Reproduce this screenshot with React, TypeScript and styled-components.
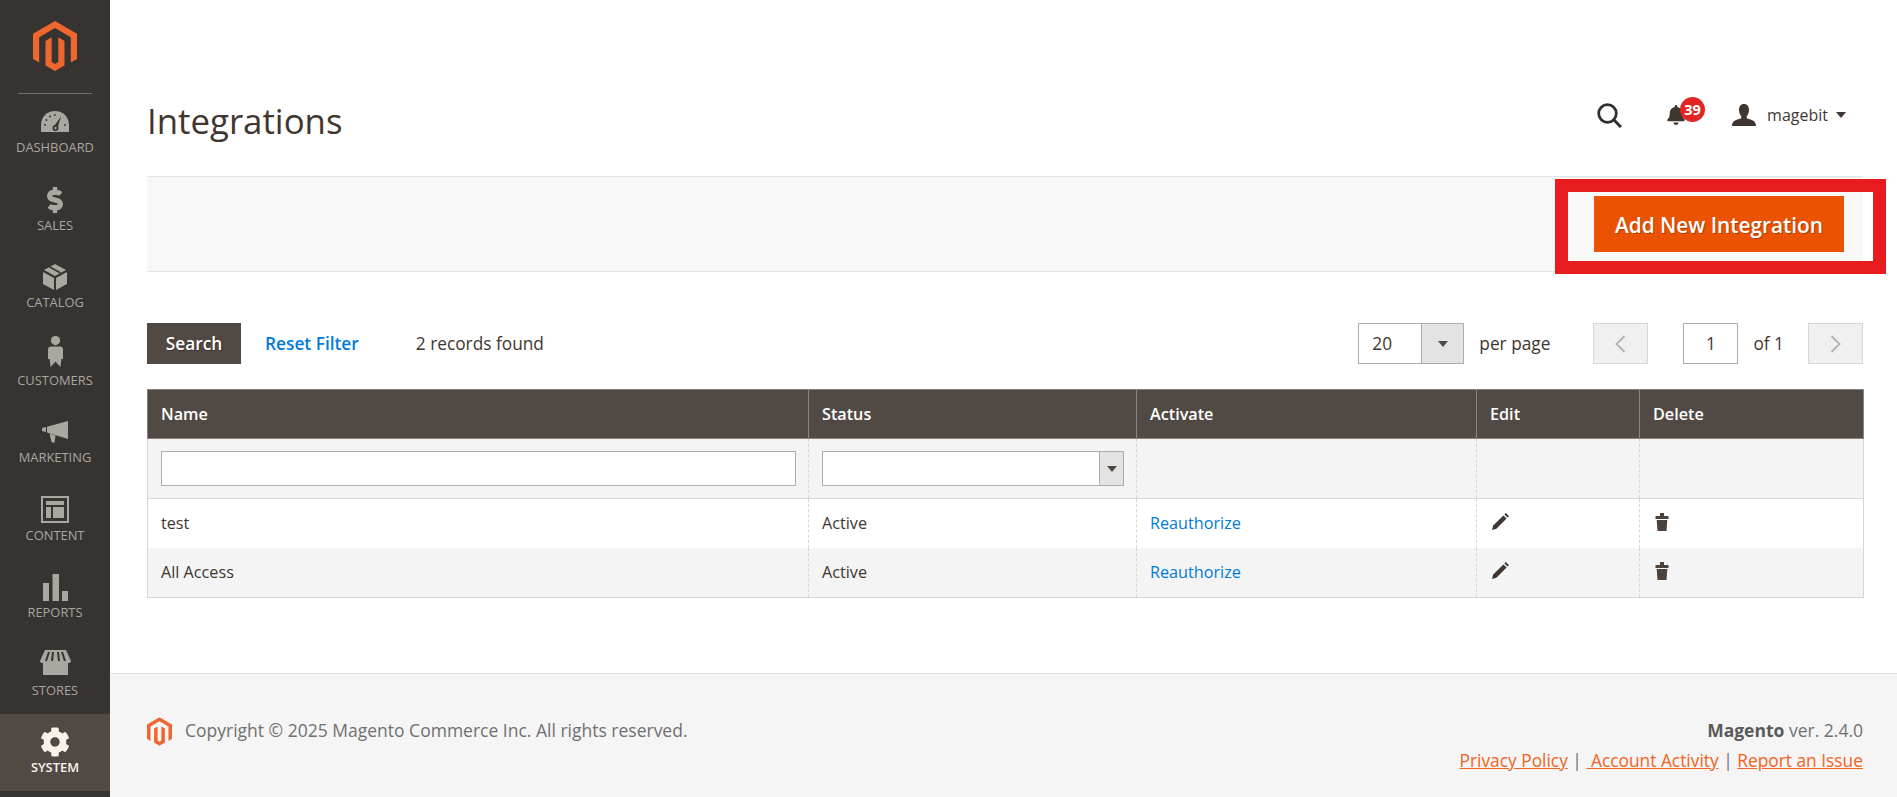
import React from "react";
import styled, { createGlobalStyle } from "styled-components";
import { FaBell, FaCog, FaDollarSign } from "react-icons/fa";

const GlobalStyle = createGlobalStyle`
  html, body {
    margin: 0;
    padding: 0;
    background: #ffffff;
    color: #41362f;
    font-family: "Open Sans", "Liberation Sans", sans-serif;
    font-size: 17.3px;
  }
  * { box-sizing: border-box; }
`;

const Page = styled.div`
  display: flex;
  width: 100%;
  height: 797px;
  overflow: hidden;
`;

const Sidebar = styled.nav`
  flex: 0 0 110px;
  display: flex;
  flex-direction: column;
  background: #373330;
`;

const LogoArea = styled.div`
  display: flex;
  height: 94px;
  margin: 0 18px;
  padding-top: 21px;
  justify-content: center;
  align-items: flex-start;
  border-bottom: 1px solid #736e69;
`;

const MenuItem = styled.a<{ $active?: boolean }>`
  display: flex;
  flex-direction: column;
  align-items: center;
  height: 77.5px;
  margin-top: ${(p) => (p.$active ? "-0.5px" : "0")};
  padding-top: 8px;
  background: ${(p) => (p.$active ? "#514943" : "transparent")};
  color: ${(p) => (p.$active ? "#f7f3eb" : "#aaa6a0")};
  font-size: 12.9px;
  font-weight: ${(p) => (p.$active ? 600 : 400)};
  text-transform: uppercase;
`;

const MenuIcon = styled.span`
  display: flex;
  height: 40px;
  align-items: center;
  justify-content: center;
`;

const MenuLabel = styled.span`
  line-height: 16px;
  margin-top: -3px;
`;

const Main = styled.main`
  flex: 1;
  min-width: 0;
  display: flex;
  flex-direction: column;
`;

const Content = styled.div`
  flex: 1;
  padding: 0 34px 0 37px;
`;

const PageHeader = styled.header`
  display: flex;
  height: 176px;
  justify-content: space-between;
  align-items: flex-start;
`;

const PageTitle = styled.h1`
  margin: 97px 0 0;
  color: #41362f;
  font-size: 34.8px;
  font-weight: 400;
  line-height: 48px;
`;

const Tools = styled.div`
  display: flex;
  height: 30px;
  margin: 100px 17px 0 0;
  align-items: center;
`;

const BellWrap = styled.span`
  position: relative;
  display: flex;
  width: 66px;
  margin-left: 44px;
  color: #41362f;
`;

const Badge = styled.span`
  position: absolute;
  left: 14px;
  top: -8px;
  width: 25px;
  height: 25px;
  border-radius: 50%;
  background: #e22626;
  color: #ffffff;
  font-size: 14.5px;
  font-weight: 700;
  line-height: 25px;
  text-align: center;
`;

const UserName = styled.span`
  margin: 0 8px 0 11px;
  color: #41362f;
  font-size: 16px;
`;

const Caret = styled.span<{ $color?: string }>`
  width: 0;
  height: 0;
  border-left: 5.5px solid transparent;
  border-right: 5.5px solid transparent;
  border-top: 6.5px solid ${(p) => p.$color || "#41362f"};
`;

const ActionBar = styled.div`
  position: relative;
  display: flex;
  height: 96px;
  padding: 19px 19px 0 0;
  justify-content: flex-end;
  background: #f8f8f8;
  border-top: 1px solid #e3e3e3;
  border-bottom: 1px solid #e3e3e3;
`;

const AddButton = styled.button`
  width: 250px;
  height: 56px;
  padding: 2px 0 0;
  border: 1px solid #eb5202;
  background: #eb5202;
  color: #ffffff;
  font-family: inherit;
  font-size: 20.8px;
  font-weight: 600;
  text-shadow: 1px 1px 0 rgba(0, 0, 0, 0.25);
`;

const HighlightBox = styled.div`
  position: absolute;
  left: 1408px;
  top: 2px;
  width: 331px;
  height: 95px;
  border: 13px solid #e81c1f;
  pointer-events: none;
`;

const ListToolbar = styled.div`
  display: flex;
  height: 41px;
  margin: 51px 0 25px;
  align-items: center;
`;

const SearchButton = styled.button`
  width: 94px;
  height: 41px;
  padding: 0;
  border: 0;
  background: #514943;
  color: #ffffff;
  font-family: inherit;
  font-size: 17.3px;
  font-weight: 600;
  text-shadow: 1px 1px 1px rgba(0, 0, 0, 0.3);
`;

const ResetLink = styled.a`
  margin-left: 24px;
  color: #007bdb;
  font-weight: 600;
`;

const Records = styled.span`
  margin-left: 57px;
`;

const Pager = styled.div`
  display: flex;
  margin-left: auto;
  align-items: center;
`;

const SelectBox = styled.div<{ $width: number; $height: number; $arrow: number }>`
  display: flex;
  width: ${(p) => p.$width}px;
  height: ${(p) => p.$height}px;
  padding-left: 13px;
  align-items: center;
  justify-content: space-between;
  background: #ffffff;
  border: 1px solid #adadad;

  & > span:last-child {
    display: flex;
    width: ${(p) => p.$arrow}px;
    height: 100%;
    align-items: center;
    justify-content: center;
    background: #e3e3e3;
    border-left: 1px solid #adadad;
  }
`;

const PagerText = styled.span<{ $left: number; $right: number }>`
  margin: 0 ${(p) => p.$right}px 0 ${(p) => p.$left}px;
`;

const PageButton = styled.span`
  display: flex;
  width: 55px;
  height: 41px;
  align-items: center;
  justify-content: center;
  background: #f0f0f0;
  border: 1px solid #d6d6d6;
`;

const PageInput = styled.input`
  width: 55px;
  height: 41px;
  margin-left: 35px;
  padding: 0;
  border: 1px solid #adadad;
  background: #ffffff;
  color: #41362f;
  font-family: inherit;
  font-size: 17.3px;
  text-align: center;
`;

const Grid = styled.table`
  width: calc(100% - 1px);
  table-layout: fixed;
  border-collapse: collapse;
  border: 1px solid #d6d6d6;
  font-size: 16.2px;
`;

const Col = styled.col<{ $w: number }>`
  width: ${(p) => p.$w}px;
`;

const HeadCell = styled.th`
  height: 49px;
  padding: 0 13px;
  background: #514943;
  border: 1px solid #8a837f;
  color: #ffffff;
  font-size: 16.2px;
  font-weight: 600;
  text-align: left;
`;

const FilterCell = styled.td`
  height: 60px;
  padding: 0 12px 0 13px;
  background: #f4f4f4;
  border-left: 1px dashed #d6d6d6;
  border-bottom: 1px solid #d6d6d6;

  &:first-child { border-left: 0; }
`;

const FilterInput = styled.input`
  display: block;
  width: 100%;
  height: 35px;
  border: 1px solid #adadad;
  background: #ffffff;
`;

const Cell = styled.td<{ $alt?: boolean }>`
  height: 49.5px;
  padding: 0 13px 2px;
  background: ${(p) => (p.$alt ? "#f4f4f4" : "#ffffff")};
  border-left: 1px dashed #d6d6d6;
  color: #41362f;

  &:first-child { border-left: 0; }
`;

const RowLink = styled.a`
  color: #007bdb;
`;

const CellIcon = styled.span`
  display: flex;
  margin: -2px 0 0 2px;
  color: #41362f;
`;

const Footer = styled.footer`
  display: flex;
  height: 124px;
  padding: 41px 34px 0 37px;
  justify-content: space-between;
  background: #f5f5f5;
  border-top: 1px solid #e3e3e3;
  color: #707070;
  font-size: 17.5px;
`;

const Copyright = styled.div`
  display: flex;
  height: 32px;
  align-items: center;
  gap: 13px;
`;

const CopyText = styled.span`
  margin-bottom: 2px;
`;

const Legal = styled.div`
  line-height: 30px;
  text-align: right;

  strong { color: #5a5a5a; font-weight: 700; }
`;

const LegalLinks = styled.div`
  font-size: 17.35px;
`;

const LegalLink = styled.a`
  color: #f26322;
  text-decoration: underline;
  white-space: pre;
`;

function MagentoLogo({ width, height }: { width: number; height: number }) {
  return (
    <svg width={width} height={height} viewBox="0 0 44 50" fill="#ee672f">
      <path d="M22 0 44 12.7V37.9L37.8 41.5V16.3L22 7.1 6.2 16.3V41.5L0 37.9V12.7Z" />
      <path d="M22 50 12.5 44.5V19.9L18.7 16.3V41L22 42.9 25.3 41V16.3L31.5 19.9V44.5Z" />
    </svg>
  );
}

const DashboardIcon = () => (
  <svg width="28" height="24" viewBox="0 0 28 24" fill="currentColor">
    <path d="M0 22V15.5C0 6.5 6 1 14 1S28 6.5 28 15.5V22Z" />
    <path d="M12.8 16.5 20 6.5 16.4 18.5Z" fill="#373330" />
    <circle cx="14.5" cy="18" r="3" fill="#373330" />
    <circle cx="14.5" cy="18" r="1.2" fill="currentColor" />
    <g fill="#373330">
      <circle cx="4" cy="15" r="0.9" />
      <circle cx="5.5" cy="10" r="0.9" />
      <circle cx="9" cy="6.5" r="0.9" />
      <circle cx="14" cy="5" r="0.9" />
      <circle cx="24" cy="15" r="0.9" />
    </g>
  </svg>
);

const CatalogIcon = () => (
  <svg width="24" height="26" viewBox="0 0 24 26" fill="currentColor">
    <path d="M0 8 11 14V26L0 20Z" />
    <path d="M24 8 13 14V26L24 20Z" />
    <path d="M12 0 23 6 12 12 1 6Z" />
    <path d="M6 2.5 17.5 9" stroke="#373330" strokeWidth="1.6" fill="none" />
  </svg>
);

const CustomersIcon = () => (
  <svg width="15" height="38" viewBox="0 0 15 38" fill="currentColor">
    <circle cx="7.5" cy="4.6" r="4.6" />
    <path d="M3 10.5H12Q15 10.5 15 13.5V23H13.4L12.4 31 7.5 25.5 2.6 31 1.6 23H0V13.5Q0 10.5 3 10.5Z" />
  </svg>
);

const MarketingIcon = () => (
  <svg width="26" height="22" viewBox="0 0 26 22" fill="currentColor">
    <path d="M0 7 4 6V11L0 10Z" />
    <path d="M5 5.7 26 0V18L5 11.5Z" />
    <path d="M7.5 12.5 13.5 14.4 12.5 22 9.5 21Z" />
  </svg>
);

const ContentIcon = () => (
  <svg width="28" height="27" viewBox="0 0 28 27" fill="currentColor">
    <path fillRule="evenodd" d="M0 0H28V27H0ZM2 2V25H26V2Z" />
    <rect x="5" y="5" width="18" height="4" />
    <rect x="5" y="11" width="5" height="11" />
    <rect x="12" y="11" width="11" height="11" />
  </svg>
);

const ReportsIcon = () => (
  <svg width="25" height="27" viewBox="0 0 25 27" fill="currentColor">
    <rect x="0" y="9" width="6" height="18" />
    <rect x="9.5" y="0" width="6.5" height="27" />
    <rect x="19" y="17" width="6" height="10" />
  </svg>
);

const StoresIcon = () => (
  <svg width="31" height="29" viewBox="0 0 31 29" fill="currentColor">
    <path d="M5 0H26L31 11Q31 13 29 13H2Q0 13 0 11Z" />
    <path d="M3 12H28V25H3Z" />
    <path d="M9 2 6 11M13 2 12 11M18 2 19 11M22 2 25 11" stroke="#373330" strokeWidth="2" fill="none" />
  </svg>
);

const SearchIcon = () => (
  <svg width="25" height="25" viewBox="0 0 25 25" fill="none" stroke="#303030">
    <circle cx="10.5" cy="10.5" r="8.8" strokeWidth="2.8" />
    <path d="M16.5 16.5 24 24" strokeWidth="3" />
  </svg>
);

const UserIcon = () => (
  <svg width="24" height="22" viewBox="0 0 24 22" fill="#41362f">
    <path d="M12 0C15.5 0 17 2.6 17 6 17 9 15.8 11 14.7 12.2V14.2C18.5 15.6 24 16 24 22H0C0 16 5.5 15.6 9.3 14.2V12.2C8.2 11 7 9 7 6 7 2.6 8.5 0 12 0Z" />
  </svg>
);

const PencilIcon = () => (
  <svg width="17" height="17" viewBox="0 0 17 17" fill="#41362f">
    <path d="M0 17 1.2 12.6 11.4 2.4 14.6 5.6 4.4 15.8Z" />
    <path d="M12.4 1.4 13.8 0 17 3.2 15.6 4.6Z" />
  </svg>
);

const TrashIcon = () => (
  <svg width="14" height="18" viewBox="0 0 14 18" fill="#4c423b">
    <path d="M5 0H9V3H5Z" />
    <path d="M0.5 3H13.5V6H0.5Z" />
    <path d="M1.7 7H12.3L11.5 18H2.5Z" />
  </svg>
);

const Chevron = ({ flip }: { flip?: boolean }) => (
  <svg width="11" height="18" viewBox="0 0 11 18" fill="none" stroke="#b5b5b5" strokeWidth="2">
    <path d={flip ? "M1.5 1 9.5 9 1.5 17" : "M9.5 1 1.5 9 9.5 17"} />
  </svg>
);

const menu = [
  { label: "Dashboard", icon: <DashboardIcon /> },
  { label: "Sales", icon: <FaDollarSign size={26} stroke="currentColor" strokeWidth={24} /> },
  { label: "Catalog", icon: <CatalogIcon /> },
  { label: "Customers", icon: <CustomersIcon /> },
  { label: "Marketing", icon: <MarketingIcon /> },
  { label: "Content", icon: <ContentIcon /> },
  { label: "Reports", icon: <ReportsIcon /> },
  { label: "Stores", icon: <StoresIcon /> },
  { label: "System", icon: <FaCog size={30} />, active: true },
];

const columns = [
  { name: "Name", width: 661 },
  { name: "Status", width: 328 },
  { name: "Activate", width: 340 },
  { name: "Edit", width: 163 },
  { name: "Delete", width: 224 },
];

const rows = ["test", "All Access"];

export default function App() {
  return (
    <Page>
      <GlobalStyle />
      <Sidebar>
        <LogoArea>
          <MagentoLogo width={44} height={50} />
        </LogoArea>
        {menu.map((item) => (
          <MenuItem key={item.label} $active={item.active}>
            <MenuIcon>{item.icon}</MenuIcon>
            <MenuLabel>{item.label}</MenuLabel>
          </MenuItem>
        ))}
      </Sidebar>

      <Main>
        <Content>
          <PageHeader>
            <PageTitle>Integrations</PageTitle>
            <Tools>
              <SearchIcon />
              <BellWrap>
                <FaBell size={20} />
                <Badge>39</Badge>
              </BellWrap>
              <UserIcon />
              <UserName>magebit</UserName>
              <Caret />
            </Tools>
          </PageHeader>

          <ActionBar>
            <AddButton>Add New Integration</AddButton>
            <HighlightBox />
          </ActionBar>

          <ListToolbar>
            <SearchButton>Search</SearchButton>
            <ResetLink>Reset Filter</ResetLink>
            <Records>2 records found</Records>
            <Pager>
              <SelectBox $width={106} $height={41} $arrow={42}>
                <span>20</span>
                <span>
                  <Caret $color="#514943" />
                </span>
              </SelectBox>
              <PagerText $left={15} $right={43}>per page</PagerText>
              <PageButton>
                <Chevron />
              </PageButton>
              <PageInput defaultValue="1" />
              <PagerText $left={15} $right={24}>of 1</PagerText>
              <PageButton>
                <Chevron flip />
              </PageButton>
            </Pager>
          </ListToolbar>

          <Grid>
            <colgroup>
              {columns.map((c) => (
                <Col key={c.name} $w={c.width} />
              ))}
            </colgroup>
            <thead>
              <tr>
                {columns.map((c) => (
                  <HeadCell key={c.name}>{c.name}</HeadCell>
                ))}
              </tr>
            </thead>
            <tbody>
              <tr>
                <FilterCell>
                  <FilterInput />
                </FilterCell>
                <FilterCell>
                  <SelectBox $width={302} $height={35} $arrow={24}>
                    <span />
                    <span>
                      <Caret $color="#514943" />
                    </span>
                  </SelectBox>
                </FilterCell>
                <FilterCell />
                <FilterCell />
                <FilterCell />
              </tr>
              {rows.map((name, i) => (
                <tr key={name}>
                  <Cell $alt={i === 1}>{name}</Cell>
                  <Cell $alt={i === 1}>Active</Cell>
                  <Cell $alt={i === 1}>
                    <RowLink>Reauthorize</RowLink>
                  </Cell>
                  <Cell $alt={i === 1}>
                    <CellIcon>
                      <PencilIcon />
                    </CellIcon>
                  </Cell>
                  <Cell $alt={i === 1}>
                    <CellIcon>
                      <TrashIcon />
                    </CellIcon>
                  </Cell>
                </tr>
              ))}
            </tbody>
          </Grid>
        </Content>

        <Footer>
          <Copyright>
            <MagentoLogo width={25} height={29} />
            <CopyText>Copyright © 2025 Magento Commerce Inc. All rights reserved.</CopyText>
          </Copyright>
          <Legal>
            <div>
              <strong>Magento</strong> ver. 2.4.0
            </div>
            <LegalLinks>
              <LegalLink>Privacy Policy</LegalLink> | <LegalLink> Account Activity</LegalLink> |{" "}
              <LegalLink>Report an Issue</LegalLink>
            </LegalLinks>
          </Legal>
        </Footer>
      </Main>
    </Page>
  );
}
